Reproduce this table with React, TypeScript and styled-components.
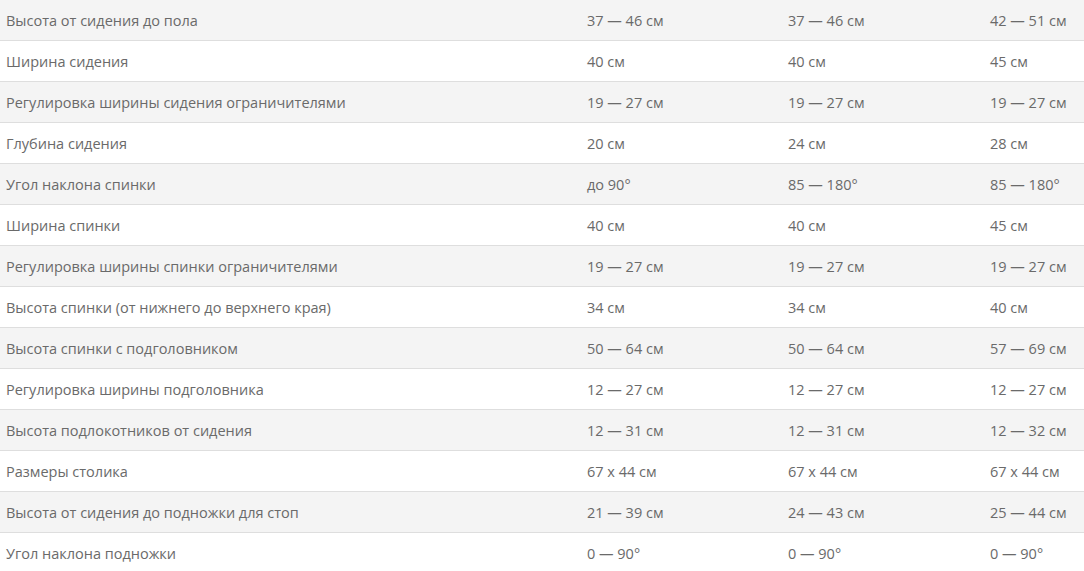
import React from "react";
import styled, { createGlobalStyle } from "styled-components";

const GlobalStyle = createGlobalStyle`
    body {
        margin: 0;
        background: #fff;
        font-family: "Open Sans", "Noto Sans", sans-serif;
    }
`

const Table = styled.div`
    width: 1084px;
`

const Row = styled.div<{ shaded?: boolean }>`
    display: grid;
    grid-template-columns: 581px 201px 202px 1fr;
    height: 40px;
    align-items: center;
    border-bottom: 1px solid #dedede;
    background: ${({ shaded }) => (shaded ? "#f4f4f4" : "#fff")};
`

const Cell = styled.div`
    padding-left: 6px;
    font-size: 14.5px;
    color: #6a6a6a;
    white-space: nowrap;
`

const rows: string[][] = [
    ["Высота от сидения до пола", "37 — 46 см", "37 — 46 см", "42 — 51 см"],
    ["Ширина сидения", "40 см", "40 см", "45 см"],
    ["Регулировка ширины сидения ограничителями", "19 — 27 см", "19 — 27 см", "19 — 27 см"],
    ["Глубина сидения", "20 см", "24 см", "28 см"],
    ["Угол наклона спинки", "до 90°", "85 — 180°", "85 — 180°"],
    ["Ширина спинки", "40 см", "40 см", "45 см"],
    ["Регулировка ширины спинки ограничителями", "19 — 27 см", "19 — 27 см", "19 — 27 см"],
    ["Высота спинки (от нижнего до верхнего края)", "34 см", "34 см", "40 см"],
    ["Высота спинки с подголовником", "50 — 64 см", "50 — 64 см", "57 — 69 см"],
    ["Регулировка ширины подголовника", "12 — 27 см", "12 — 27 см", "12 — 27 см"],
    ["Высота подлокотников от сидения", "12 — 31 см", "12 — 31 см", "12 — 32 см"],
    ["Размеры столика", "67 х 44 см", "67 х 44 см", "67 х 44 см"],
    ["Высота от сидения до подножки для стоп", "21 — 39 см", "24 — 43 см", "25 — 44 см"],
    ["Угол наклона подножки", "0 — 90°", "0 — 90°", "0 — 90°"],
]

const App = () => {
    return (
        <>
            <GlobalStyle />
            <Table>
                {rows.map((r, i) => (
                    <Row key={i} shaded={i % 2 === 0}>
                        {r.map((c, j) => (
                            <Cell key={j}>{c}</Cell>
                        ))}
                    </Row>
                ))}
            </Table>
        </>
    )
}

export default App;
